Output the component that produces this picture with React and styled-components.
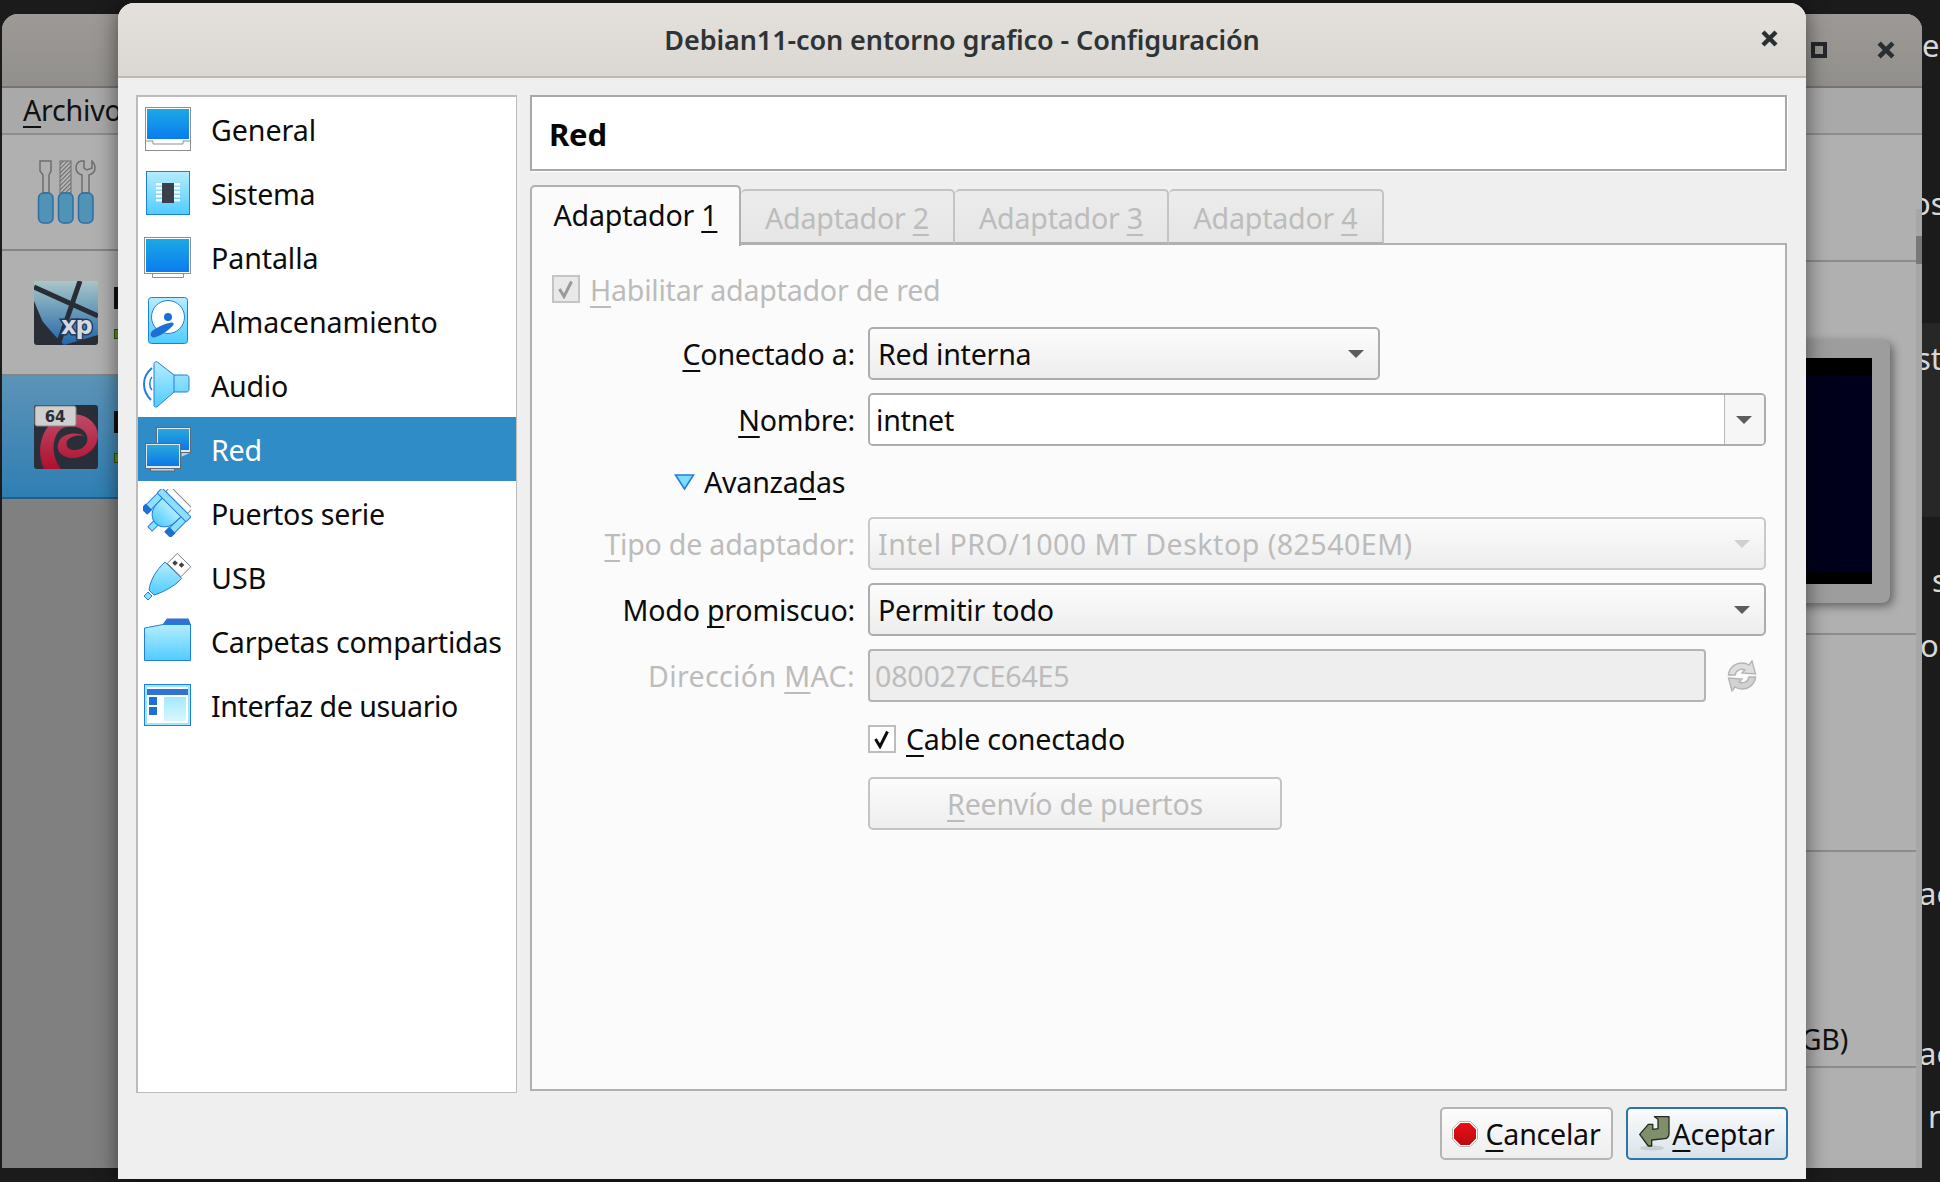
import React from "react";
import styled, { createGlobalStyle } from "styled-components";

const GlobalStyle = createGlobalStyle`
  html, body {
    margin: 0;
    padding: 0;
    background: #1b1b1b;
  }
  body {
    font-family: "Noto Sans", "Open Sans", sans-serif;
    font-size: 28.6px;
    letter-spacing: -0.23px;
    color: #0c0c0c;
  }
  svg { display: block; }
  * { box-sizing: border-box; }
`;

/* ---------- desktop ---------- */

const Desktop = styled.div`
  position: relative;
  width: 1940px;
  height: 1182px;
  overflow: hidden;
  background: #1b1b1b;
`;

const SideWindow = styled.div`
  position: absolute;
  left: 1922px;
  top: 0;
  width: 18px;
  height: 1182px;
  overflow: hidden;
  display: flex;
  flex-direction: column;
  color: #d8d8d8;
  font-size: 31px;
  letter-spacing: 0;
`;

const SideLine = styled.div`
  height: ${(p) => p.$h}px;
  display: flex;
  align-items: center;
  flex-shrink: 0;
  white-space: nowrap;
  padding-left: ${(p) => p.$x || 0}px;
  background: ${(p) => (p.$band ? "#272727" : "transparent")};
  line-height: 1;
`;

const ClippedWord = styled.span`
  margin-left: ${(p) => p.$shift || 0}px;
`;

/* ---------- window behind the dialog ---------- */

const BackWindow = styled.div`
  position: absolute;
  left: 2px;
  top: 14px;
  width: 1920px;
  height: 1154px;
  border-radius: 16px 16px 0 0;
  overflow: hidden;
  display: flex;
  flex-direction: column;
  background: #b0b0b0;
`;

const BackTitle = styled.div`
  height: 74px;
  flex-shrink: 0;
  display: flex;
  align-items: center;
  justify-content: flex-end;
  gap: 50px;
  padding-right: 27px;
  background: linear-gradient(#9d9996, #92908c);
  border-bottom: 2px solid #767370;
`;

const MaxGlyph = styled.div`
  width: 16px;
  height: 16px;
  border: 4px solid #24282c;
`;

const BackBody = styled.div`
  flex: 1;
  display: flex;
  min-height: 0;
`;

const BackLeft = styled.div`
  width: 560px;
  display: flex;
  flex-direction: column;
  background: #808080;
`;

const Menu = styled.div`
  height: 47px;
  padding-left: 21px;
  display: flex;
  align-items: center;
  background: #a9a9a9;
  border-bottom: 2px solid #8d8d8d;
  color: #111;
  line-height: 1;
`;

const MachineRow = styled.div`
  height: ${(p) => p.$h}px;
  flex-shrink: 0;
  display: flex;
  align-items: center;
  gap: 16px;
  padding-left: 32px;
  background: ${(p) =>
    p.$selected ? "linear-gradient(#5c93b8, #2f7fb3)" : "#b0b0b0"};
  border-bottom: 2px solid ${(p) => (p.$selected ? "#1e5f8a" : "#858585")};
`;

const MachineInfo = styled.div`
  display: flex;
  flex-direction: column;
  align-items: flex-start;
  gap: 20px;
`;

const MachineName = styled.div`
  width: 10px;
  height: 22px;
  background: #111;
`;

const StatusDot = styled.div`
  width: 10px;
  height: 10px;
  background: #5d8f1f;
  border: 1px solid #33520e;
`;

const BackRight = styled.div`
  position: relative;
  flex: 1;
  display: flex;
  flex-direction: column;
`;

const BackToolbar = styled.div`
  height: 47px;
  flex-shrink: 0;
  background: #a9a9a9;
  border-bottom: 2px solid #8d8d8d;
`;

const DetailRow = styled.div`
  height: ${(p) => p.$h}px;
  flex-shrink: 0;
  border-bottom: 2px solid #8c8c8c;
  display: flex;
  justify-content: flex-end;
  align-items: ${(p) => (p.$end ? "flex-end" : "flex-start")};
  padding-top: ${(p) => p.$top || 0}px;
  padding-right: ${(p) => p.$right || 0}px;
  padding-bottom: ${(p) => (p.$end ? 10 : 0)}px;
  color: #111;
  line-height: 1.2;
`;

const Preview = styled.div`
  width: 400px;
  height: 263px;
  padding: 18px;
  background: #9d9d9d;
  border-radius: 0 8px 8px 0;
  box-shadow: 3px 3px 10px rgba(0, 0, 0, 0.45);
`;

const PreviewScreen = styled.div`
  height: 226px;
  background: #00001c;
  border-top: 18px solid #000;
  border-bottom: 12px solid #000;
`;

const BackScrollbar = styled.div`
  position: absolute;
  top: 121px;
  right: 0;
  bottom: 0;
  width: 6px;
  background: #a6a6a6;

  &::before {
    content: "";
    display: block;
    margin-top: 27px;
    height: 28px;
    background: #787878;
  }
`;

/* ---------- dialog ---------- */

const Dialog = styled.div`
  position: absolute;
  left: 118px;
  top: 3px;
  width: 1688px;
  height: 1176px;
  display: flex;
  flex-direction: column;
  background: #efefef;
  border-radius: 16px 16px 0 0;
  box-shadow: 0 0 22px rgba(0, 0, 0, 0.55);
`;

const TitleBar = styled.div`
  height: 75px;
  flex-shrink: 0;
  display: flex;
  align-items: center;
  justify-content: center;
  background: linear-gradient(#e4e0dc, #dbd7d3);
  border-radius: 16px 16px 0 0;
  border-bottom: 2px solid #c0b9b2;
  font-weight: 600;
  font-size: 27px;
  letter-spacing: -0.1px;
  color: #2e3436;
`;

const DialogClose = styled.div`
  position: absolute;
  right: 28px;
  top: 27px;
`;

const DialogBody = styled.div`
  flex-shrink: 0;
  display: flex;
  gap: 13px;
  padding: 17px 19px 0 18px;
`;

const SectionList = styled.div`
  width: 381px;
  height: 998px;
  flex-shrink: 0;
  background: #fff;
  border: 1px solid #bcbcbc;
  border-width: 2px 1px 1px 2px;
`;

const SectionRow = styled.div`
  height: 64px;
  display: flex;
  align-items: center;
  gap: 20px;
  padding-left: 5px;
  background: ${(p) => (p.$active ? "#308cc6" : "transparent")};
  color: ${(p) => (p.$active ? "#fff" : "#0c0c0c")};
  letter-spacing: ${(p) => (p.$track === undefined ? -0.23 : p.$track)}px;
  white-space: nowrap;
`;

const Main = styled.div`
  flex: 1;
  min-width: 0;
  height: 998px;
  padding-bottom: 2px;
  display: flex;
  flex-direction: column;
`;

const PageHeader = styled.div`
  height: 76px;
  flex-shrink: 0;
  display: flex;
  align-items: center;
  padding: 1px 0 0 17px;
  background: #fff;
  border: 2px solid #a8a8a8;
  box-shadow: 1px 1px 0 #fff;
  font-weight: 700;
  font-size: 31px;
  color: #050505;
`;

const TabBar = styled.div`
  margin-top: 14px;
  height: 59px;
  flex-shrink: 0;
  display: flex;
  align-items: flex-end;
  position: relative;
  z-index: 1;
`;

const Tab = styled.div`
  width: ${(p) => p.$w}px;
  height: ${(p) => (p.$active ? 61 : 55)}px;
  display: flex;
  align-items: center;
  justify-content: center;
  padding-top: ${(p) => (p.$active ? 0 : 1)}px;
  padding-bottom: ${(p) => (p.$active ? 4 : 0)}px;
  margin-bottom: ${(p) => (p.$active ? -2 : 0)}px;
  white-space: nowrap;
  border: 2px solid ${(p) => (p.$active ? "#b0b0b0" : "#c4c4c4")};
  border-bottom: ${(p) => (p.$active ? "none" : "2px solid #b0b0b0")};
  border-left-width: ${(p) => (p.$first ? 2 : 0)}px;
  border-radius: 5px 5px 0 0;
  background: ${(p) =>
    p.$active ? "#fbfbfb" : "linear-gradient(#ececec, #e6e6e6)"};
  color: ${(p) => (p.$active ? "#0c0c0c" : "#bcbcbc")};
`;

const TabPanel = styled.div`
  margin-top: -1px;
  flex: 1;
  min-height: 0;
  display: flex;
  flex-direction: column;
  padding: 18px 19px 0 0;
  background: #fbfbfb;
  border: 2px solid #b0b0b0;
`;

const FieldRow = styled.div`
  height: ${(p) => p.$h || 53}px;
  margin-bottom: ${(p) => (p.$gap === undefined ? 13 : p.$gap)}px;
  flex-shrink: 0;
  display: flex;
  align-items: center;
  gap: 13px;
  padding-left: ${(p) => p.$indent || 0}px;
`;

const FieldLabel = styled.label`
  width: 323px;
  flex-shrink: 0;
  text-align: right;
  white-space: nowrap;
  color: ${(p) => (p.$disabled ? "#bcbcbc" : "#0c0c0c")};
  letter-spacing: ${(p) => (p.$track === undefined ? -0.23 : p.$track)}px;
`;

const Mnemonic = styled.u`
  text-decoration: underline;
  text-decoration-thickness: 2px;
  text-underline-offset: 5px;
  text-decoration-skip-ink: none;
`;

const Combo = styled.div`
  width: ${(p) => (p.$w ? `${p.$w}px` : "auto")};
  flex: ${(p) => (p.$w ? "none" : 1)};
  height: 53px;
  display: flex;
  align-items: center;
  justify-content: space-between;
  padding: 0 22px 0 8px;
  border: 2px solid ${(p) => (p.$disabled ? "#c9c9c9" : "#adadad")};
  border-radius: 5px;
  background: linear-gradient(#fcfcfc, #ededed);
  color: ${(p) => (p.$disabled ? "#bcbcbc" : "#0c0c0c")};
  letter-spacing: ${(p) => (p.$track === undefined ? -0.23 : p.$track)}px;
  white-space: nowrap;
`;

const Caret = styled.span`
  display: block;
  width: 0;
  height: 0;
  margin-right: -8px;
  border-left: 8px solid transparent;
  border-right: 8px solid transparent;
  border-top: 8px solid ${(p) => (p.$disabled ? "#d0d0d0" : "#5c5c5c")};
`;

const EditableCombo = styled.div`
  flex: 1;
  height: 53px;
  display: flex;
  border: 2px solid #adadad;
  border-radius: 5px;
  overflow: hidden;
`;

const ComboInput = styled.div`
  flex: 1;
  display: flex;
  align-items: center;
  padding-left: 6px;
  background: #fff;
`;

const ComboButton = styled.div`
  width: 40px;
  display: flex;
  align-items: center;
  justify-content: center;
  padding-right: 2px;
  background: #f6f6f6;
  border-left: 1px solid #b8b8b8;

  ${Caret} {
    margin-right: 0;
  }
`;

const Expander = styled.div`
  display: flex;
  align-items: center;
  gap: 9px;
`;

const TextField = styled.div`
  width: 838px;
  height: 53px;
  display: flex;
  align-items: center;
  padding-left: 5px;
  background: #eeeeee;
  border: 2px solid #b4b4b4;
  border-radius: 4px;
  color: #bcbcbc;
`;

const MacRefresh = styled.div`
  margin-left: 8px;
`;

const CheckRow = styled.div`
  display: flex;
  align-items: center;
  gap: 10px;
  padding-left: ${(p) => p.$indent || 0}px;
  color: ${(p) => (p.$disabled ? "#bcbcbc" : "#0c0c0c")};
`;

const CheckBox = styled.div`
  width: 28px;
  height: 28px;
  display: flex;
  align-items: center;
  justify-content: center;
  border: 2px solid ${(p) => (p.$disabled ? "#c4c4c4" : "#bdbdbd")};
  background: ${(p) => (p.$disabled ? "#e9e9e9" : "#fff")};
`;

const PushButton = styled.div`
  width: ${(p) => p.$w}px;
  height: 53px;
  display: flex;
  align-items: center;
  justify-content: center;
  gap: ${(p) => p.$gap || 0}px;
  border: 2px solid ${(p) => p.$border || "#c4c4c4"};
  border-radius: 5px;
  background: ${(p) => p.$bg || "linear-gradient(#fcfcfc, #eeeeee)"};
  color: ${(p) => p.$color || "#0c0c0c"};
  white-space: nowrap;
`;

const ButtonBar = styled.div`
  height: 53px;
  margin: 14px 18px 0 0;
  flex-shrink: 0;
  display: flex;
  justify-content: flex-end;
  gap: 13px;
`;

/* ---------- icons ---------- */

const Sky = ({ id, from = "#b5edff", to = "#50ccff" }) => (
  <linearGradient id={id} x1="0" y1="0" x2="0" y2="1">
    <stop offset="0" stopColor={from} />
    <stop offset="1" stopColor={to} />
  </linearGradient>
);

const Icon48 = ({ children }) => (
  <svg width="48" height="48" viewBox="0 0 48 48" style={{ flexShrink: 0 }}>
    {children}
  </svg>
);

const GeneralIcon = () => (
  <Icon48>
    <defs><Sky id="gen" from="#1ba9e4" to="#0a7cf0" /></defs>
    <rect x="2.5" y="2.5" width="45" height="43" fill="#fff" stroke="#8f8f8f" />
    <rect x="4" y="4" width="42" height="30" fill="url(#gen)" />
    <path d="M2 36H10V39H40V36H48" fill="none" stroke="#8f8f8f" />
  </Icon48>
);

const SystemIcon = () => (
  <Icon48>
    <defs><Sky id="sys" /></defs>
    <rect x="3.5" y="2.5" width="43" height="43" fill="url(#sys)" stroke="#1f7fdc" />
    {[14, 18, 22, 26, 30].map((y) => (
      <rect key={y} x="13" y={y} width="24" height="2.4" fill="#fff" />
    ))}
    <rect x="19" y="14" width="12" height="20" fill="#3a3f4c" />
  </Icon48>
);

const DisplayIcon = () => (
  <Icon48>
    <defs><Sky id="dsp" from="#1ba9e4" to="#0a7cf0" /></defs>
    <path d="M9.5 40V44.5H40.5V40" fill="#fff" stroke="#8f8f8f" />
    <rect x="1.5" y="4.5" width="46" height="36" fill="#fff" stroke="#8f8f8f" />
    <rect x="3" y="6" width="43" height="33" fill="url(#dsp)" />
  </Icon48>
);

const StorageIcon = () => (
  <Icon48>
    <defs><Sky id="sto" /></defs>
    <rect x="5.5" y="0.5" width="39" height="46" rx="3" fill="url(#sto)" stroke="#1f7fdc" />
    <circle cx="25" cy="20" r="16.5" fill="#fff" stroke="#1f7fdc" strokeWidth="1" />
    <circle cx="25" cy="20" r="4" fill="#1c6fd6" />
    <path d="M8 35.5C10 32 22 26 29 25.5C31 25.5 31 27.5 30 28.5C26 33 16 40 11 40.5C8 40.5 7 38 8 35.5Z" fill="#1c6fd6" />
  </Icon48>
);

const AudioIcon = () => (
  <Icon48>
    <defs><Sky id="aud" /></defs>
    <path d="M9 7C3 12 1 17 1 23C1 29 3 34 8 39" fill="none" stroke="#1f7fdc" strokeWidth="2" />
    <path d="M9 16C6 19 6 26 9 29" fill="none" stroke="#1f7fdc" strokeWidth="1.5" />
    <path d="M11 3C11 1 13 0 15 1.5L31 14H43C45 14 46 15 46 17V28C46 30 45 31 43 31H31L15 45C13 47 11 46 11 44Z" fill="url(#aud)" stroke="#1f7fdc" />
    <path d="M31 14V31" stroke="#1f7fdc" />
  </Icon48>
);

const NetworkIcon = () => (
  <Icon48>
    <defs><Sky id="net" from="#2aa8dc" to="#0c77e8" /></defs>
    <rect x="13.5" y="2.5" width="34" height="25" fill="#dfe8ee" stroke="#5e6b75" />
    <rect x="15" y="4" width="31" height="21" fill="url(#net)" />
    <path d="M38 32V27.5H47.5" fill="#bcd3e2" stroke="#5e6b75" />
    <rect x="7.5" y="42.5" width="24" height="3.5" fill="#bcd3e2" stroke="#5e6b75" />
    <rect x="2.5" y="18.5" width="35" height="25" fill="#dfe8ee" stroke="#5e6b75" />
    <rect x="4" y="20" width="32" height="21" fill="url(#net)" />
  </Icon48>
);

const SerialIcon = () => (
  <Icon48>
    <defs><Sky id="ser" /></defs>
    <g transform="rotate(45 24 23)">
      <rect x="8.5" y="2.5" width="31" height="7" fill="#fff" stroke="#8a8a8a" />
      <rect x="4" y="16" width="7" height="18" fill="#8fe0ff" stroke="#1f7fdc" />
      <rect x="37" y="16" width="7" height="18" fill="#8fe0ff" stroke="#1f7fdc" />
      <rect x="3" y="32" width="9" height="7" fill="#1c6fd6" />
      <rect x="36" y="32" width="9" height="7" fill="#1c6fd6" />
      <rect x="21" y="36" width="6" height="11" fill="#8fe0ff" stroke="#1f7fdc" />
      <path d="M11 16H37V24C37 33 31 39 24 39C17 39 11 33 11 24Z" fill="url(#ser)" stroke="#1f7fdc" />
      <rect x="3.5" y="9.5" width="41" height="7" rx="1" fill="#8fe0ff" stroke="#1f7fdc" />
    </g>
  </Icon48>
);

const UsbIcon = () => (
  <Icon48>
    <defs><Sky id="usb" /></defs>
    <path d="M34.3 0.5L47.8 13.7L38 23.7L24.3 10.3Z" fill="#fff" stroke="#7e7e7e" />
    <rect x="30" y="8" width="4" height="4" fill="#444" transform="rotate(45 32 10)" />
    <rect x="36.5" y="10" width="4" height="4" fill="#444" transform="rotate(45 38.5 12)" />
    <path d="M1 43L5 39L9 43L5 47Z" fill="#8fe0ff" stroke="#1f7fdc" />
    <path d="M22 9L38.7 25.3L34 30C26 36 18 40 11 42L6 37C7 28 13 17 22 9Z" fill="url(#usb)" stroke="#1f7fdc" />
  </Icon48>
);

const FolderIcon = () => (
  <Icon48>
    <defs><Sky id="fol" /></defs>
    <path d="M19 8L24 1.5H45.5L48 8Z" fill="#2f72d2" />
    <path d="M1.5 11L20 7.5H47.5V43.5H1.5Z" fill="url(#fol)" stroke="#1f7fdc" />
  </Icon48>
);

const InterfaceIcon = () => (
  <Icon48>
    <defs><Sky id="ifc" from="#a4e8ff" to="#d8f7ff" /></defs>
    <rect x="1.5" y="3.5" width="46" height="41" fill="#9fe6ff" stroke="#1f7fdc" />
    <rect x="4" y="6" width="41" height="36" fill="#fff" />
    <rect x="4" y="8" width="41" height="6" fill="#2f72d2" />
    <rect x="6" y="16" width="8" height="8" fill="#1c6fd6" />
    <rect x="6" y="26" width="8" height="8" fill="#1c6fd6" />
    <rect x="21" y="16" width="22" height="24" fill="url(#ifc)" />
  </Icon48>
);

const CloseGlyph = ({ size = 17 }) => (
  <svg width={size} height={size} viewBox="0 0 17 17">
    <path d="M2 2L15 15M15 2L2 15" stroke="#2a2f33" strokeWidth="4.4" />
  </svg>
);

const CheckGlyph = ({ color }) => (
  <svg width="20" height="20" viewBox="0 0 20 20">
    <path d="M3.5 10L8 17.5L15.5 2.5" fill="none" stroke={color} strokeWidth="3" />
  </svg>
);

const TriangleIcon = () => (
  <svg width="21" height="18" viewBox="0 0 21 18">
    <path d="M1.5 2H19.5L10.5 16Z" fill="#7fdcff" stroke="#1f7fdc" strokeWidth="1.6" />
  </svg>
);

const RefreshIcon = () => (
  <svg width="30" height="32" viewBox="0 0 30 32">
    <path d="M1.5 15C2 8 8 3 15 3C18 3 20.5 4 22 5L25 1L28.5 14L15 13L18 10C14 8 9 10 8 15Z" fill="#dedede" stroke="#b4b4b4" strokeWidth="1.4" />
    <path d="M1.5 15C2 8 8 3 15 3C18 3 20.5 4 22 5L25 1L28.5 14L15 13L18 10C14 8 9 10 8 15Z" fill="#d2d2d2" stroke="#b4b4b4" strokeWidth="1.4" transform="rotate(180 15 16)" />
  </svg>
);

const StopIcon = () => (
  <svg width="26" height="26" viewBox="0 0 26 26">
    <defs>
      <linearGradient id="stop" x1="0" y1="0" x2="0" y2="1">
        <stop offset="0" stopColor="#ee1118" />
        <stop offset="1" stopColor="#b80a10" />
      </linearGradient>
    </defs>
    <path d="M8 1H18L25 8V18L18 25H8L1 18V8Z" fill="url(#stop)" stroke="#fff" strokeWidth="2" />
    <path d="M7.6 0.5H18.4L25.5 7.6V18.4L18.4 25.5H7.6L0.5 18.4V7.6Z" fill="none" stroke="#b5b5b5" strokeWidth="1" />
  </svg>
);

const AcceptIcon = () => (
  <svg width="31" height="35" viewBox="0 0 31 35">
    <ellipse cx="13" cy="32" rx="12" ry="2.5" fill="#c9ced2" />
    <path d="M15.5 0.7H30V18C30 20.5 28 22.7 26 22.7L12.7 24V30H9.3L0.7 18.3L9.3 8.3H13.8V13.3L19 12.7V3.3Z" fill="#7f8f6b" stroke="#23291c" strokeWidth="1.3" strokeLinejoin="round" />
  </svg>
);

const ToolsIcon = () => (
  <svg width="64" height="64" viewBox="-4 0 64 64">
    <defs>
      <pattern id="hatch" width="3" height="3" patternUnits="userSpaceOnUse" patternTransform="rotate(45)">
        <rect width="3" height="3" fill="#c4c4c4" />
        <rect width="1.4" height="3" fill="#6e6e6e" />
      </pattern>
    </defs>
    <path d="M2 1H13V11L11 15V33H5V15L2 11Z" fill="none" stroke="#6e6e6e" strokeWidth="1.5" />
    <rect x="22" y="1" width="11" height="32" fill="url(#hatch)" stroke="#6e6e6e" strokeWidth="1" />
    <path d="M43 1C39 2 38 6 38 8C38 12 41 14 44 15V33H51V15C54 14 57 12 57 8C57 6 56 3 54 1V8L49 10L46 8V1Z" fill="none" stroke="#6e6e6e" strokeWidth="1.5" />
    {[0.5, 20.5, 40.5].map((x) => (
      <rect key={x} x={x} y="33" width="14.5" height="30" rx="5" fill="#5093b6" stroke="#2b6fa3" strokeWidth="1.5" />
    ))}
  </svg>
);

const XpIcon = () => (
  <svg width="64" height="64" viewBox="0 0 64 64">
    <defs>
      <linearGradient id="xpg" x1="0" y1="0" x2="0" y2="1">
        <stop offset="0" stopColor="#a9c6c8" />
        <stop offset="1" stopColor="#2067a8" />
      </linearGradient>
    </defs>
    <rect width="64" height="64" rx="3" fill="#292d36" />
    <path d="M0 0H64V54L30 64L10 44L0 20Z" fill="url(#xpg)" />
    <path d="M0 6L64 35M46 0L24 64M0 34L22 60" stroke="#292d36" strokeWidth="5" fill="none" />
    <text x="27" y="53" fontFamily="'DejaVu Sans', sans-serif" fontWeight="700" fontSize="24" letterSpacing="-1" fill="#d4dae0" stroke="#203a60" strokeWidth="3" paintOrder="stroke">xp</text>
  </svg>
);

const DebianIcon = () => (
  <svg width="64" height="64" viewBox="0 0 64 64">
    <defs>
      <linearGradient id="swirl" x1="0" y1="0" x2="0" y2="1">
        <stop offset="0" stopColor="#c04a68" />
        <stop offset="1" stopColor="#b0102f" />
      </linearGradient>
    </defs>
    <rect width="64" height="64" rx="3" fill="#2a2e38" />
    <path d="M10 64C2 46 6 20 28 11C46 5 63 14 64 30C64 44 50 54 37 53C26 52 21 44 25 36C29 28 44 26 52 32C46 29 36 31 33 36C31 41 35 46 42 45C50 44 55 38 53 31C50 22 38 19 29 23C19 28 15 48 27 64Z" fill="url(#swirl)" />
    <rect x="1" y="1" width="41" height="20" rx="2" fill="#cfcfcf" stroke="#888" />
    <text x="21" y="17" textAnchor="middle" fontFamily="'DejaVu Sans', sans-serif" fontWeight="700" fontSize="15" fill="#2a2e38">64</text>
  </svg>
);

/* ---------- data ---------- */

const SECTIONS = [
  { name: "General", icon: GeneralIcon, track: -0.05 },
  { name: "Sistema", icon: SystemIcon },
  { name: "Pantalla", icon: DisplayIcon, track: -0.1 },
  { name: "Almacenamiento", icon: StorageIcon, track: -0.06 },
  { name: "Audio", icon: AudioIcon },
  { name: "Red", icon: NetworkIcon, active: true },
  { name: "Puertos serie", icon: SerialIcon },
  { name: "USB", icon: UsbIcon, track: 0.1 },
  { name: "Carpetas compartidas", icon: FolderIcon },
  { name: "Interfaz de usuario", icon: InterfaceIcon, track: -0.43 },
];

const TABS = [
  { n: "1", w: 211, active: true },
  { n: "2", w: 214 },
  { n: "3", w: 214 },
  { n: "4", w: 215 },
];

const SIDE_LINES = [
  { h: 25 },
  { h: 40, t: "e" },
  { h: 118 },
  { h: 40, t: "os", shift: -10 },
  { h: 100 },
  { h: 70, t: "st", shift: -6, band: true },
  { h: 124, band: true },
  { h: 43 },
  { h: 40, t: "s", x: 10 },
  { h: 25 },
  { h: 40, t: "o", shift: -2 },
  { h: 208 },
  { h: 40, t: "ac", shift: -3 },
  { h: 120 },
  { h: 40, t: "ac", shift: -3 },
  { h: 23 },
  { h: 40, t: "n", x: 6 },
];

const App = () => {
  return (
    <>
      <GlobalStyle />
      <Desktop>
        <SideWindow>
          {SIDE_LINES.map((line, i) => (
            <SideLine key={i} $h={line.h} $x={line.x} $band={line.band}>
              {line.t && <ClippedWord $shift={line.shift}>{line.t}</ClippedWord>}
            </SideLine>
          ))}
        </SideWindow>

        <BackWindow>
          <BackTitle>
            <MaxGlyph />
            <CloseGlyph size={18} />
          </BackTitle>
          <BackBody>
            <BackLeft>
              <Menu>
                <span><Mnemonic>A</Mnemonic>rchivo</span>
              </Menu>
              <MachineRow $h={116}>
                <ToolsIcon />
              </MachineRow>
              <MachineRow $h={125}>
                <XpIcon />
                <MachineInfo>
                  <MachineName />
                  <StatusDot />
                </MachineInfo>
              </MachineRow>
              <MachineRow $h={123} $selected>
                <DebianIcon />
                <MachineInfo>
                  <MachineName />
                  <StatusDot />
                </MachineInfo>
              </MachineRow>
            </BackLeft>
            <BackRight>
              <BackToolbar />
              <DetailRow $h={127} />
              <DetailRow $h={373} $top={78} $right={32}>
                <Preview>
                  <PreviewScreen />
                </Preview>
              </DetailRow>
              <DetailRow $h={217} />
              <DetailRow $h={216} $end $right={74}>
                <span>(2,00 GB)</span>
              </DetailRow>
              <BackScrollbar />
            </BackRight>
          </BackBody>
        </BackWindow>

        <Dialog>
          <TitleBar>
            Debian11-con entorno grafico - Configuración
            <DialogClose>
              <CloseGlyph />
            </DialogClose>
          </TitleBar>
          <DialogBody>
            <SectionList>
              {SECTIONS.map((s) => (
                <SectionRow key={s.name} $active={s.active} $track={s.track}>
                  <s.icon />
                  {s.name}
                </SectionRow>
              ))}
            </SectionList>
            <Main>
              <PageHeader>Red</PageHeader>
              <TabBar>
                {TABS.map((t, i) => (
                  <Tab key={t.n} $w={t.w} $active={t.active} $first={i === 0}>
                    <span>Adaptador <Mnemonic>{t.n}</Mnemonic></span>
                  </Tab>
                ))}
              </TabBar>
              <TabPanel>
                <FieldRow $h={52} $gap={12}>
                  <CheckRow $indent={20} $disabled>
                    <CheckBox $disabled>
                      <CheckGlyph color="#9a9a9a" />
                    </CheckBox>
                    <span><Mnemonic>H</Mnemonic>abilitar adaptador de red</span>
                  </CheckRow>
                </FieldRow>
                <FieldRow>
                  <FieldLabel><Mnemonic>C</Mnemonic>onectado a:</FieldLabel>
                  <Combo $w={512}>
                    Red interna
                    <Caret />
                  </Combo>
                </FieldRow>
                <FieldRow>
                  <FieldLabel><Mnemonic>N</Mnemonic>ombre:</FieldLabel>
                  <EditableCombo>
                    <ComboInput>intnet</ComboInput>
                    <ComboButton><Caret /></ComboButton>
                  </EditableCombo>
                </FieldRow>
                <FieldRow $h={45} $gap={13} $indent={142}>
                  <Expander>
                    <TriangleIcon />
                    <span>Avanza<Mnemonic>d</Mnemonic>as</span>
                  </Expander>
                </FieldRow>
                <FieldRow>
                  <FieldLabel $disabled><Mnemonic>T</Mnemonic>ipo de adaptador:</FieldLabel>
                  <Combo $disabled $track={0.47}>
                    Intel PRO/1000 MT Desktop (82540EM)
                    <Caret $disabled />
                  </Combo>
                </FieldRow>
                <FieldRow>
                  <FieldLabel>Modo <Mnemonic>p</Mnemonic>romiscuo:</FieldLabel>
                  <Combo>
                    Permitir todo
                    <Caret />
                  </Combo>
                </FieldRow>
                <FieldRow $gap={11}>
                  <FieldLabel $disabled $track={0.34}>Dirección <Mnemonic>M</Mnemonic>AC:</FieldLabel>
                  <TextField>080027CE64E5</TextField>
                  <MacRefresh><RefreshIcon /></MacRefresh>
                </FieldRow>
                <FieldRow $h={51}>
                  <CheckRow $indent={336}>
                    <CheckBox>
                      <CheckGlyph color="#0c0c0c" />
                    </CheckBox>
                    <span><Mnemonic>C</Mnemonic>able conectado</span>
                  </CheckRow>
                </FieldRow>
                <FieldRow>
                  <FieldLabel />
                  <PushButton $w={414} $color="#bcbcbc">
                    <span><Mnemonic>R</Mnemonic>eenvío de puertos</span>
                  </PushButton>
                </FieldRow>
              </TabPanel>
            </Main>
          </DialogBody>
          <ButtonBar>
            <PushButton $w={173} $gap={7} $border="#b4b4b4">
              <StopIcon />
              <span><Mnemonic>C</Mnemonic>ancelar</span>
            </PushButton>
            <PushButton
              $w={162}
              $gap={2}
              $border="#2a76a8"
              $bg="linear-gradient(#fbfcfd, #d9e3ea)"
            >
              <AcceptIcon />
              <span><Mnemonic>A</Mnemonic>ceptar</span>
            </PushButton>
          </ButtonBar>
        </Dialog>
      </Desktop>
    </>
  );
};

export default App;
